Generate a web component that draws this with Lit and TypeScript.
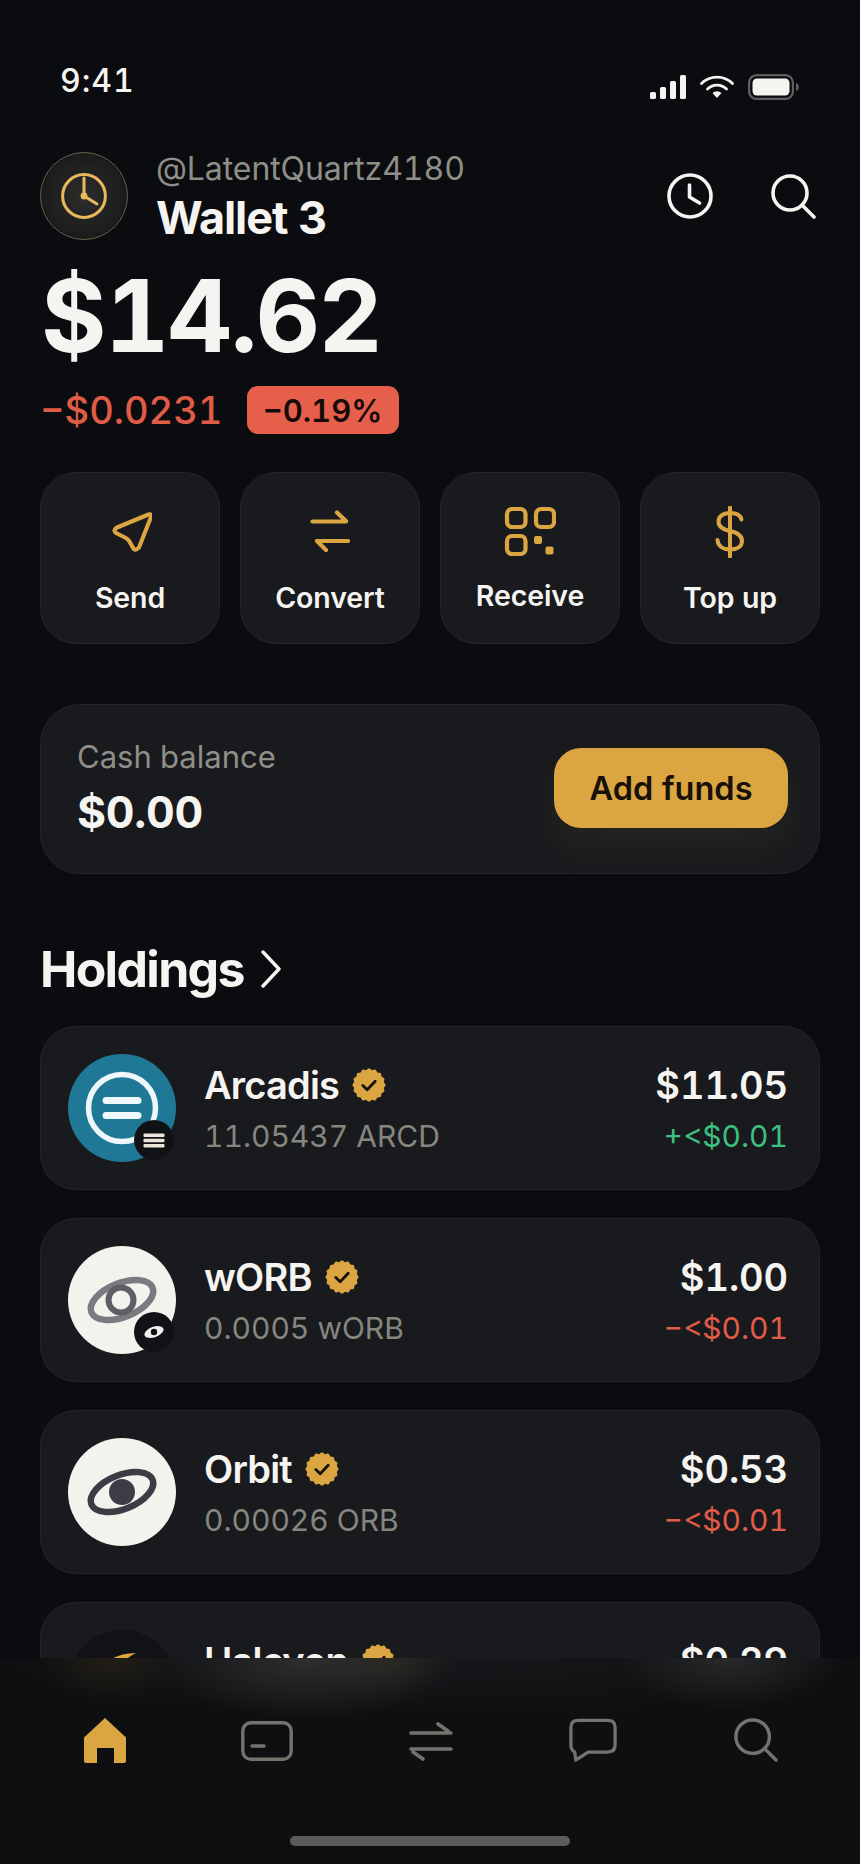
import { LitElement, html, css, svg } from "lit";
import { customElement } from "lit/decorators.js";

const GOLD = "#dba642";

const scallop = (() => {
  const pts: string[] = [];
  for (let i = 0; i < 96; i++) {
    const t = (i / 96) * Math.PI * 2;
    const r = 15.9 + 0.75 * Math.cos(t * 16);
    pts.push(`${(17 + r * Math.cos(t)).toFixed(2)} ${(17 + r * Math.sin(t)).toFixed(2)}`);
  }
  return "M" + pts.join("L") + "Z";
})();

const badge = html`<svg class="verified" viewBox="0 0 34 34" aria-hidden="true">
  <path fill="#dba642" d="${scallop}"/>
  <path d="M10.8 17.5l4.4 4.2 8-8.4" fill="none" stroke="#14120c" stroke-width="2.8" stroke-linecap="round" stroke-linejoin="round"/>
</svg>`;

const orbit = (ring: string) => svg`
  <g transform="rotate(-22 54 54)">
    <ellipse cx="54" cy="54" rx="33" ry="17" fill="none" stroke="${ring}" stroke-width="6.5"/>
  </g>`;

@customElement("app-root")
export class AppRoot extends LitElement {
  static styles = css`
    :host {
      display: block;
      width: 860px;
      height: 1864px;
      overflow: hidden;
      position: relative;
      background: #0b0c0f;
      color: #f5f4f0;
      font-family: Inter, "Liberation Sans", sans-serif;
      font-variant-numeric: tabular-nums;
    }
    svg { display: block; }
    .status {
      height: 128px;
      padding: 0 61px 0 60px;
      display: flex;
      justify-content: space-between;
      align-items: flex-start;
    }
    .time { margin-top: 60px; font-size: 32px; line-height: 42px; font-weight: 500; letter-spacing: 1px; }
    .status-icons { margin-top: 74px; display: flex; align-items: center; gap: 14px; }
    .head { margin: 0 40px; height: 112px; padding-top: 24px; display: flex; align-items: flex-start; gap: 28px; box-sizing: border-box; }
    .avatar {
      width: 88px; height: 88px; box-sizing: border-box; border-radius: 50%; flex: none;
      border: 1.5px solid #6a5f45;
      background: radial-gradient(circle, #2e2d2c 0%, #131316 100%);
      display: flex; align-items: center; justify-content: center;
    }
    .who { flex: 1; margin-top: -3px; }
    .handle { font-size: 32px; line-height: 40px; color: #8f8f88; letter-spacing: -0.08px; }
    .wallet { font-size: 45px; line-height: 52px; font-weight: 700; letter-spacing: -1.1px; margin-top: 3px; }
    .head-actions { display: flex; gap: 58px; margin: 21px 4px 0 0; align-items: center; }
    .balance { margin: 26px 0 0 41px; font-size: 100px; line-height: 100px; font-weight: 700; letter-spacing: -1.8px; }
    .change { margin: 20px 40px 0 40px; display: flex; align-items: center; gap: 24px; height: 48px; }
    .delta { color: #e05c47; font-size: 38px; font-weight: 500; }
    .pill { background: #e65f4b; color: #140a08; width: 152px; height: 48px; border-radius: 11px; display: flex; align-items: center; justify-content: center; font-size: 31px; font-weight: 600; }
    .actions { margin: 38px 40px 0; display: grid; grid-template-columns: repeat(4, 180px); gap: 20px; }
    .action, .cash, .row {
      background: #191a1e;
      border: 1.5px solid #25262a;
      box-sizing: border-box;
    }
    .action { height: 172px; border-radius: 36px; display: flex; flex-direction: column; align-items: center; padding-top: 31px; }
    .action .ic { width: 56px; height: 56px; display: flex; align-items: center; justify-content: center; }
    .action .lb { font-size: 28.5px; font-weight: 600; margin-top: 20px; line-height: 36px; letter-spacing: -0.1px; }
    .action.up .lb { margin-top: 18px; }
    .cash { margin: 60px 40px 0; height: 170px; border-radius: 40px; display: flex; align-items: center; justify-content: space-between; padding: 0 31px 0 36px; position: relative; overflow: hidden; }
    .cash-l { font-size: 31px; line-height: 40px; color: #8f8f88; margin-top: -2px; }
    .cash-v { font-size: 44.5px; line-height: 54px; font-weight: 700; margin-top: 8px; letter-spacing: -0.3px; }
    .add { width: 234px; height: 80px; border-radius: 27px; background: #dba642; color: #17110a; display: flex; align-items: center; justify-content: center; font-size: 32.5px; font-weight: 600; box-shadow: 0 20px 40px rgba(219,166,66,.07); margin-bottom: 2px; }
    .holdings { margin: 62px 40px 0 40px; height: 66px; display: flex; align-items: center; gap: 16px; font-size: 50px; font-weight: 700; letter-spacing: -1.7px; }
    .list { margin: 24px 40px 0; display: flex; flex-direction: column; gap: 28px; }
    .row { height: 164px; border-radius: 36px; display: flex; align-items: center; padding: 0 31px 0 27px; }
    .logo { width: 108px; height: 108px; flex: none; position: relative; }
    .logo > svg { width: 108px; height: 108px; }
    .mini { position: absolute; right: 2px; bottom: 2px; width: 40px; height: 40px; border-radius: 50%; background: #111215; display: flex; align-items: center; justify-content: center; }
    .mid { flex: 1; margin-left: 28px; }
    .name { display: flex; align-items: center; gap: 13px; font-size: 38px; line-height: 46px; font-weight: 600; letter-spacing: -0.8px; }
    .verified { width: 34px; height: 34px; }
    .sub { font-size: 30px; line-height: 38px; color: #86867f; margin-top: 9px; }
    .right { text-align: right; }
    .amt { font-size: 38px; line-height: 46px; font-weight: 600; letter-spacing: -0.1px; }
    .chg { font-size: 30px; line-height: 38px; margin-top: 9px; }
    .pos { color: #3fbf7f; }
    .neg { color: #e05c47; }
    .nav {
      position: absolute; left: 0; right: 0; bottom: 0; height: 206px;
      background:
        radial-gradient(ellipse 150px 62px at 305px 0, rgba(66,66,68,.55), transparent),
        radial-gradient(ellipse 110px 52px at 730px 0, rgba(66,68,70,.45), transparent),
        radial-gradient(ellipse 72px 46px at 110px 0, rgba(130,98,34,.16), transparent),
        radial-gradient(ellipse 60px 40px at 388px 0, rgba(130,98,34,.14), transparent),
        radial-gradient(ellipse 440px 60px at 430px 0, rgba(40,41,44,.35), transparent),
        #0e0f11;
    }
    .tabs { position: absolute; left: 0; right: 0; top: 60px; display: grid; grid-template-columns: repeat(5, 163px); padding-left: 23px; justify-items: center; }
    .bar { position: absolute; left: 290px; width: 280px; height: 10px; bottom: 18px; background: #5b5b5b; border-radius: 5px; }
  `;

  row(logo: unknown, name: string, sub: string, amt: string, chg: string, cls: string) {
    return html`<div class="row">
      <div class="logo">${logo}</div>
      <div class="mid">
        <div class="name">${name} ${badge}</div>
        <div class="sub">${sub}</div>
      </div>
      <div class="right">
        <div class="amt">${amt}</div>
        <div class="chg ${cls}">${chg}</div>
      </div>
    </div>`;
  }

  render() {
    const s = (c: string, w = 4) => `fill:none;stroke:${c};stroke-width:${w};stroke-linecap:round;stroke-linejoin:round`;
    const arcadis = html`<svg viewBox="0 0 108 108">
        <circle cx="54" cy="54" r="54" fill="#1f7895"/>
        <circle cx="54" cy="54" r="33.5" fill="none" stroke="#eef8fb" stroke-width="5.5"/>
        <rect x="34.5" y="43" width="39" height="7" rx="3.5" fill="#eef8fb"/>
        <rect x="34.5" y="58" width="39" height="7" rx="3.5" fill="#eef8fb"/>
      </svg>
      <div class="mini"><svg width="22" height="15" viewBox="0 0 22 15"><rect x="0.5" y="0.5" width="21" height="3.4" rx="1" fill="#e9e5d8"/><rect x="0.5" y="5.8" width="21" height="3.4" rx="1" fill="#e9e5d8"/><rect x="0.5" y="11" width="21" height="3.4" rx="1" fill="#e9e5d8"/></svg></div>`;
    const worb = html`<svg viewBox="0 0 108 108">
        <circle cx="54" cy="54" r="54" fill="#f4f2ec"/>
        ${orbit("#7a7a82")}
        <circle cx="53" cy="54" r="12.5" fill="none" stroke="#5e5e66" stroke-width="6"/>
      </svg>
      <div class="mini"><svg width="22" height="16" viewBox="0 0 22 16"><g transform="rotate(-20 11 8)"><ellipse cx="11" cy="8" rx="10" ry="5.2" fill="#f0efe9"/></g><circle cx="11" cy="8" r="3.2" fill="#111215"/></svg></div>`;
    const orb = html`<svg viewBox="0 0 108 108">
        <circle cx="54" cy="54" r="54" fill="#f4f2ec"/>
        ${orbit("#3c3c46")}
        <circle cx="54" cy="54" r="13" fill="#3c3c46"/>
      </svg>`;
    const halcyon = html`<svg viewBox="0 0 108 108">
        <circle cx="54" cy="54" r="54" fill="#111216"/>
        <path d="M18 62C24 38 44 23 68 23 58 28 50 36 47 45 36 47 26 53 18 62z" fill="#dba642"/>
      </svg>`;
    return html`
      <div class="status">
        <div class="time">9:41</div>
        <div class="status-icons">
          <svg width="36" height="25" viewBox="0 0 36 25"><g fill="#f5f4f0"><rect x="0" y="17" width="6" height="7" rx="1.6"/><rect x="10" y="12" width="6" height="12" rx="1.6"/><rect x="20" y="6" width="6" height="18" rx="1.6"/><rect x="30" y="0" width="6" height="24" rx="1.6"/></g></svg>
          <svg width="34" height="24" viewBox="0 0 34 24"><g style="${s("#f5f4f0", 2.8)}"><path d="M1.5 8.5a22 22 0 0 1 31 0"/><path d="M7.5 14a13.5 13.5 0 0 1 19 0"/></g><path d="M12.5 18a7 7 0 0 1 9 0L17 23z" fill="#f5f4f0"/></svg>
          <svg width="51" height="26" viewBox="0 0 51 26"><rect x="1.1" y="1.1" width="43.8" height="23.8" rx="7.5" fill="none" stroke="#5f5f60" stroke-width="2.2"/><rect x="4.5" y="4.5" width="37" height="17" rx="4.5" fill="#f5f4f0"/><path d="M48 9c2 .5 2.8 2 2.8 4s-.8 3.5-2.8 4z" fill="#5f5f60"/></svg>
        </div>
      </div>
      <div class="head">
        <div class="avatar">
          <svg width="48" height="48" viewBox="0 0 48 48"><circle cx="24" cy="24" r="21.4" style="${s("#eab95c", 3)}"/><path d="M24 6v18l13 8" style="${s("#eab95c", 3)}"/><circle cx="24" cy="24" r="3.4" fill="#eab95c"/></svg>
        </div>
        <div class="who">
          <div class="handle">@LatentQuartz4180</div>
          <div class="wallet">Wallet 3</div>
        </div>
        <div class="head-actions">
          <svg width="46" height="46" viewBox="0 0 46 46"><circle cx="23" cy="23" r="21" style="${s("#f5f4f0", 3.6)}"/><path d="M22.5 12v12l10 6" style="${s("#f5f4f0", 3.6)}"/></svg>
          <svg width="45" height="45" viewBox="0 0 45 45"><circle cx="19" cy="19" r="17" style="${s("#f5f4f0", 3.6)}"/><path d="M31 31L43 43" style="${s("#f5f4f0", 3.6)}"/></svg>
        </div>
      </div>
      <div class="balance">$14.62</div>
      <div class="change"><span class="delta">−$0.0231</span><span class="pill">−0.19%</span></div>
      <div class="actions">
        <div class="action">
          <div class="ic"><svg width="44" height="44" viewBox="0 0 44 44"><path d="M40.5 4.5Q44 3.5 43 7L31 37.5Q27 42 24.5 37L21.5 31.5Q20 29 17 27.5L9 23.5Q4 20.5 9 17.5Z" style="${s(GOLD, 4.1)}"/></svg></div>
          <div class="lb">Send</div>
        </div>
        <div class="action">
          <div class="ic"><svg width="40" height="44" viewBox="0 0 40 44"><path d="M2.5 11.5H36M27 2.5L36 11" style="${s(GOLD, 4.2)}"/><path d="M38 31H7M7 31L16 40" style="${s(GOLD, 4.2)}"/></svg></div>
          <div class="lb">Convert</div>
        </div>
        <div class="action up">
          <div class="ic"><svg width="52" height="52" viewBox="0 0 52 52"><g style="${s(GOLD, 4.2)}"><rect x="3" y="3" width="18.5" height="18" rx="5"/><rect x="32" y="3" width="18" height="18" rx="5"/><rect x="3" y="30" width="18.5" height="18" rx="5"/></g><rect x="30" y="30" width="8" height="8" rx="2" fill="#dba642"/><rect x="41.5" y="40.5" width="8" height="8" rx="2" fill="#dba642"/></svg></div>
          <div class="lb">Receive</div>
        </div>
        <div class="action">
          <div class="ic"><svg width="32" height="52" viewBox="0 0 32 52"><path d="M16 1.5v49" style="${s(GOLD, 4)}"/><path d="M27.5 13.5C26.5 9 22 7 16 7 9 7 4.5 10.5 4.5 15.5 4.5 21 9 23.5 16 25 23 26.5 28 29 28 35 28 40.5 23 43.5 16 43.5 9 43.5 4 40 3.5 34" style="${s(GOLD, 4)}"/></svg></div>
          <div class="lb">Top up</div>
        </div>
      </div>
      <div class="cash">
        <div>
          <div class="cash-l">Cash balance</div>
          <div class="cash-v">$0.00</div>
        </div>
        <div class="add">Add funds</div>
      </div>
      <div class="holdings">Holdings <svg width="22" height="38" viewBox="0 0 22 38"><path d="M3 2l16 17L3 36" style="${s("#f5f4f0", 3.4)}"/></svg></div>
      <div class="list">
        ${this.row(arcadis, "Arcadis", "11.05437 ARCD", "$11.05", "+<$0.01", "pos")}
        ${this.row(worb, "wORB", "0.0005 wORB", "$1.00", "−<$0.01", "neg")}
        ${this.row(orb, "Orbit", "0.00026 ORB", "$0.53", "−<$0.01", "neg")}
        ${this.row(halcyon, "Halcyon", "1.2 HAL", "$0.29", "−<$0.01", "neg")}
      </div>
      <div class="nav">
        <div class="tabs">
          <svg width="44" height="46" viewBox="0 0 44 46"><path d="M22 0L43 19.5V43q0 2-2 2H31V30H14v15H3q-2 0-2-2V19.5z" fill="#dba642"/></svg>
          <svg width="52" height="40" viewBox="0 0 52 40" style="margin:3px 2px 0 0"><rect x="1.8" y="1.8" width="48.4" height="36.4" rx="8" style="${s("#74746e", 3.4)}"/><path d="M11 25h12" style="${s("#74746e", 3.4)}"/></svg>
          <svg width="44" height="40" viewBox="0 0 44 40" style="margin-top:4px"><path d="M2 11h40M29 2l10 7" style="${s("#74746e", 3.6)}"/><path d="M42 27H2M14 37L4 30" style="${s("#74746e", 3.6)}"/></svg>
          <svg width="48" height="45" viewBox="0 0 50 46" style="margin-right:2px"><path d="M10 2h30q8 0 8 7v19q0 7-8 7H20L7 43.5l-1-8.5Q2 33 2 28V9q0-7 8-7z" style="${s("#74746e", 3.4)}"/></svg>
          <svg width="44" height="44" viewBox="0 0 46 46" style="margin-right:2px"><circle cx="19.5" cy="19.5" r="17.5" style="${s("#74746e", 3.6)}"/><path d="M32 32l12 12" style="${s("#74746e", 3.6)}"/></svg>
        </div>
        <div class="bar"></div>
      </div>
    `;
  }
}
